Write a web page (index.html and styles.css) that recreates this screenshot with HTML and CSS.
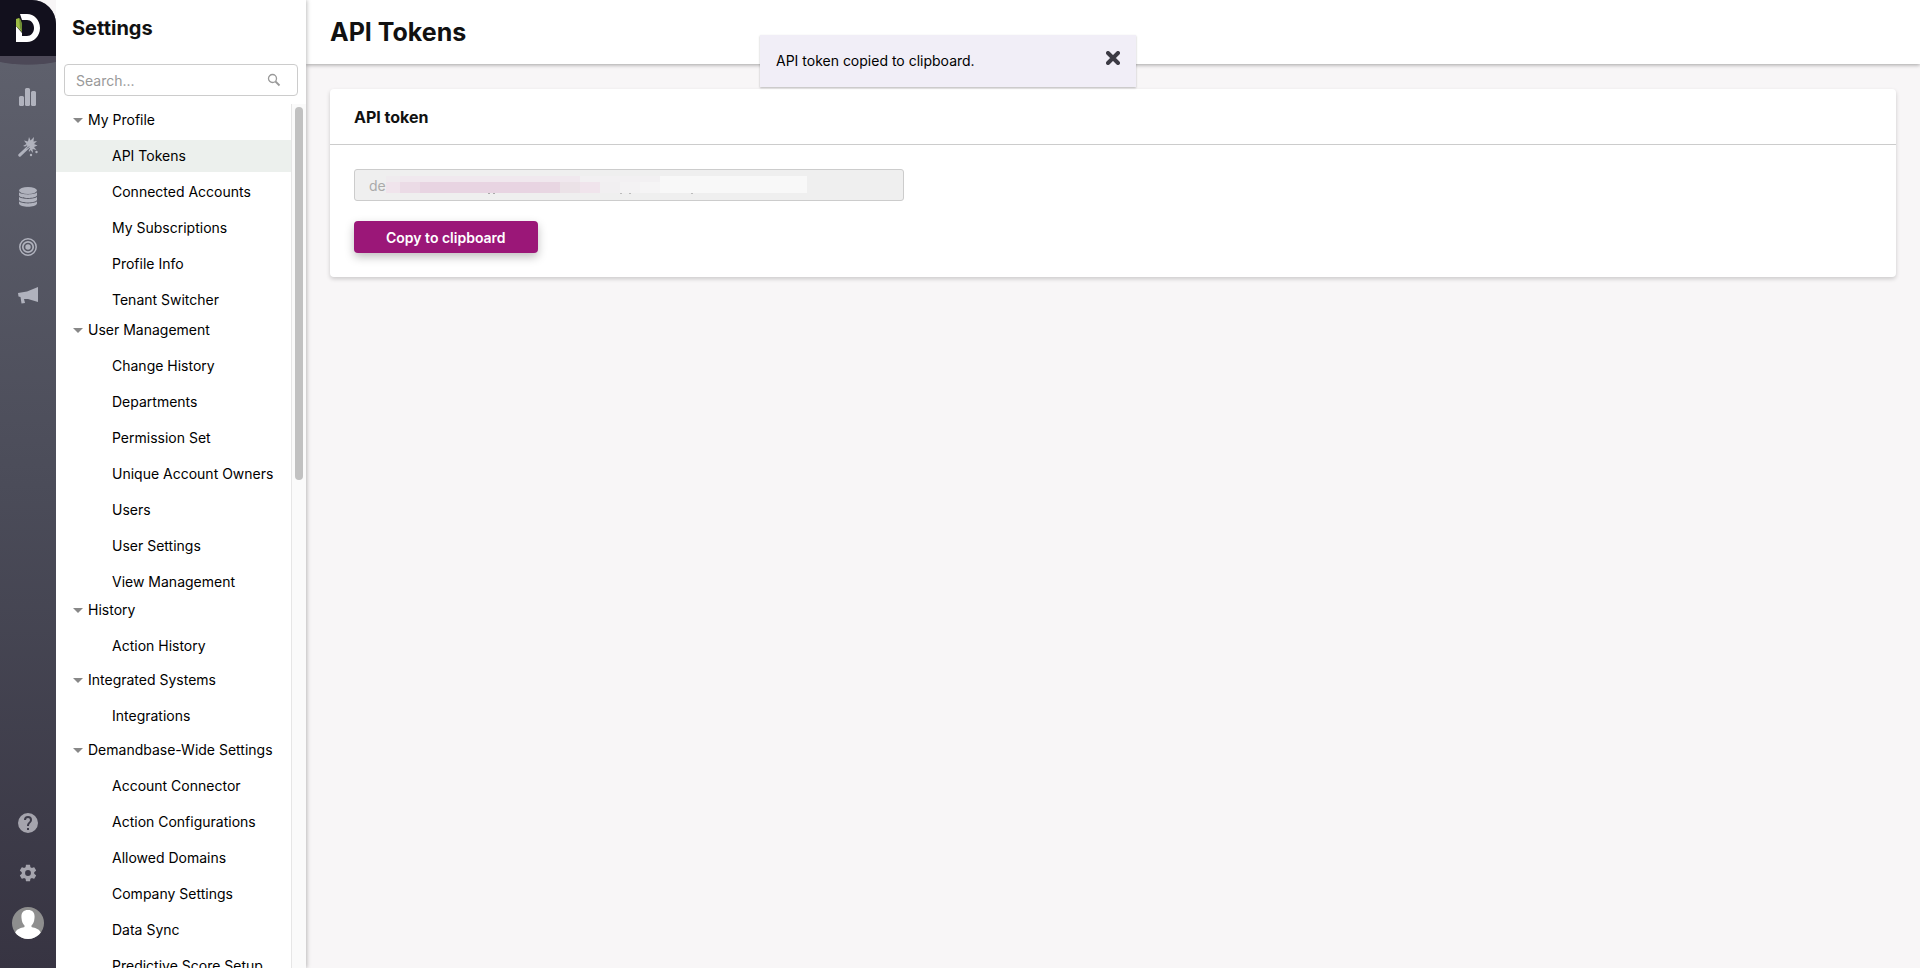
FILE: index.html
```html
<!DOCTYPE html>
<html lang="en">

<head>
    <meta charset="UTF-8">
    <meta name="viewport" content="width=device-width, initial-scale=1">
    <title>API Tokens</title>
    <link rel="stylesheet" href="styles.css">
</head>

<body>
    <nav class="rail" aria-label="Main">
        <a class="logo" href="#" aria-label="Home">
            <svg width="24" height="28" viewBox="0 0 24 28">
                <path fill="#fff" d="M4 0h7c7 0 13 6 13 14s-6 14-13 14H0V17l6 3v2h5c4 0 7-3.500 7-8s-3-8-7-8H6z" />
                <path fill="#fff" d="M0 12l6 7v4H0z" />
                <path fill="#9dbb45" d="M0 5l3-1c2 2 3 5 3 9v5L0 12z" />
                <path fill="#6f8d35" d="M3 4c2 2 3 5 3 9v5L4 14z" />
            </svg>
        </a>
        <div class="rail-top">
            <a class="rail-link" href="#" aria-label="Analytics">
                <svg width="20" height="20" viewBox="0 0 20 20" fill="currentColor">
                    <rect x="1" y="9" width="5" height="10" rx="1.500" />
                    <rect x="7" y="1" width="5" height="18" rx="1.500" />
                    <rect x="13" y="4" width="5" height="15" rx="1.500" />
                </svg>
            </a>
            <a class="rail-link" href="#" aria-label="Orchestration">
                <svg width="20" height="20" viewBox="0 0 20 20" fill="currentColor">
                    <path d="M11 0l1.500 3.500L16 0l-.5 4.500L19 4l-3 3 3.500 1.500L16 10l2.500 3-4-1 .5 4-2.500-3-1.500 2-.5-3.500L9 10 5 9l3.500-2L6 3.500l4 1z" />
                    <path d="M1.500 18.500L10.500 10" fill="none" stroke="#5a5d6a" stroke-width="5" />
                    <path d="M1.800 18.200L11 9.500" fill="none" stroke="currentColor" stroke-width="3" stroke-linecap="round" />
                    <path d="M9 11.500L11 9.500" fill="none" stroke="#5a5d6a" stroke-width="1" />
                    <circle cx="13" cy="18" r="1.200" />
                    <circle cx="18.500" cy="15" r="1.200" />
                </svg>
            </a>
            <a class="rail-link" href="#" aria-label="Data">
                <svg width="20" height="20" viewBox="0 0 20 20" fill="currentColor">
                    <ellipse cx="10" cy="3.500" rx="9" ry="3.500" />
                    <path d="M1 5.300c2 2.800 16 2.800 18 0v2.900c-1 3.700-17 3.700-18 0z" />
                    <path d="M1 9.800c2 2.800 16 2.800 18 0v2.900c-1 3.700-17 3.700-18 0z" />
                    <path d="M1 14.300c2 2.800 16 2.800 18 0v2.200c-1 4.400-17 4.400-18 0z" />
                </svg>
            </a>
            <a class="rail-link" href="#" aria-label="Targeting">
                <svg width="20" height="20" viewBox="0 0 20 20" fill="none" stroke="currentColor">
                    <circle cx="10" cy="10" r="8.200" stroke-width="1.500" />
                    <circle cx="10" cy="10" r="5.200" stroke-width="1.700" />
                    <circle cx="10" cy="10" r="2.700" fill="currentColor" stroke="none" />
                </svg>
            </a>
            <a class="rail-link" href="#" aria-label="Advertising">
                <svg width="20" height="20" viewBox="0 0 20 20" fill="currentColor">
                    <path d="M0 6l9-1.500L20 0v15l-10-3H6l1 4-3.500.5L2.500 10 .5 9.500z" />
                </svg>
            </a>
        </div>
        <div class="rail-bottom">
            <a class="rail-link" href="#" aria-label="Help">
                <svg width="24" height="24" viewBox="0 0 24 24" fill="currentColor">
                    <path d="M12 2a10 10 0 1 0 0 20 10 10 0 0 0 0-20zm1 17h-2v-2h2v2zm2.070-7.750l-.9.920C13.450 12.900 13 13.500 13 15h-2v-.5c0-1.100.45-2.100 1.170-2.830l1.240-1.260c.37-.36.590-.86.590-1.410a2 2 0 0 0-4 0H8a4 4 0 0 1 8 0c0 .88-.36 1.680-.93 2.250z" />
                </svg>
            </a>
            <a class="rail-link" href="#" aria-label="Settings">
                <svg width="20" height="20" viewBox="0 0 24 24" fill="currentColor">
                    <path d="M19.430 12.980c.04-.32.070-.64.070-.98s-.03-.66-.07-.98l2.110-1.650c.19-.15.240-.42.120-.64l-2-3.460c-.12-.22-.39-.3-.61-.22l-2.490 1c-.52-.4-1.080-.73-1.690-.98l-.38-2.650A.49.490 0 0 0 14 2h-4c-.25 0-.46.180-.49.420l-.38 2.650c-.61.250-1.170.590-1.690.98l-2.490-1c-.23-.09-.49 0-.61.220l-2 3.460c-.13.220-.07.490.12.640l2.110 1.650c-.04.320-.07.650-.07.980s.03.660.070.980l-2.110 1.650c-.19.150-.24.420-.12.640l2 3.460c.12.220.39.300.61.220l2.490-1c.52.400 1.080.730 1.690.980l.38 2.650c.03.240.24.420.49.420h4c.25 0 .46-.18.490-.42l.38-2.650c.61-.25 1.170-.59 1.690-.98l2.490 1c.23.090.49 0 .61-.22l2-3.460c.12-.22.070-.49-.12-.64l-2.110-1.650zM12 15.500a3.500 3.500 0 1 1 0-7 3.500 3.500 0 0 1 0 7z" />
                </svg>
            </a>
            <a class="rail-link" href="#" aria-label="Account">
                <svg width="32" height="32" viewBox="0 0 32 32">
                    <clipPath id="avatar"><circle cx="16" cy="16" r="16" /></clipPath>
                    <g clip-path="url(#avatar)">
                        <rect width="32" height="32" fill="#8e8e8e" />
                        <path fill="#fff" d="M16 3c5 0 7 3 6.500 8-.3 4-1.500 6-3 7.500v1.500c4 1 8 2 9.500 6v7H3v-7c1.500-4 5.500-5 9.500-6v-1.500c-1.500-1.500-2.700-3.500-3-7.500C9 6 11 3 16 3z" />
                    </g>
                </svg>
            </a>
        </div>
    </nav>

    <aside class="panel">
        <h2 class="panel-title">Settings</h2>
        <div class="search">
            <input class="search-input" type="text" placeholder="Search..." aria-label="Search settings">
            <svg class="search-icon" width="14" height="14" viewBox="0 0 14 14" fill="none" stroke="#999">
                <circle cx="5.500" cy="5.500" r="4" stroke-width="1.300" />
                <path d="M8.500 8.500l4 4" stroke-width="1.800" />
            </svg>
        </div>
        <div class="tree-wrap">
            <div class="tree">
                <section class="group" style="--rows: 6">
                    <button class="group-title">My Profile</button>
                    <a class="item active" href="#">API Tokens</a>
                    <a class="item" href="#">Connected Accounts</a>
                    <a class="item" href="#">My Subscriptions</a>
                    <a class="item" href="#">Profile Info</a>
                    <a class="item" href="#">Tenant Switcher</a>
                </section>
                <section class="group" style="--rows: 8">
                    <button class="group-title">User Management</button>
                    <a class="item" href="#">Change History</a>
                    <a class="item" href="#">Departments</a>
                    <a class="item" href="#">Permission Set</a>
                    <a class="item" href="#">Unique Account Owners</a>
                    <a class="item" href="#">Users</a>
                    <a class="item" href="#">User Settings</a>
                    <a class="item" href="#">View Management</a>
                </section>
                <section class="group" style="--rows: 2">
                    <button class="group-title">History</button>
                    <a class="item" href="#">Action History</a>
                </section>
                <section class="group" style="--rows: 2">
                    <button class="group-title">Integrated Systems</button>
                    <a class="item" href="#">Integrations</a>
                </section>
                <section class="group" style="--rows: 7">
                    <button class="group-title">Demandbase-Wide Settings</button>
                    <a class="item" href="#">Account Connector</a>
                    <a class="item" href="#">Action Configurations</a>
                    <a class="item" href="#">Allowed Domains</a>
                    <a class="item" href="#">Company Settings</a>
                    <a class="item" href="#">Data Sync</a>
                    <a class="item" href="#">Predictive Score Setup</a>
                </section>
            </div>
            <div class="scrollbar">
                <div class="thumb"></div>
            </div>
        </div>
    </aside>

    <main class="main">
        <header class="page-header">
            <h1 class="page-title">API Tokens</h1>
        </header>
        <section class="card">
            <h3 class="card-title">API token</h3>
            <div class="card-body">
                <div class="token">
                    <input class="token-input" type="text" value="de" aria-label="API token" disabled>
                    <div class="token-mask"></div>
                </div>
                <button class="copy">Copy to clipboard</button>
            </div>
        </section>
    </main>

    <div class="toast" role="status">
        <span>API token copied to clipboard.</span>
        <button class="toast-close" aria-label="Close">
            <svg width="14" height="14" viewBox="0 0 14 14" stroke="#3c3a44" stroke-width="4" stroke-linecap="round">
                <path d="M2 2l10 10M12 2L2 12" />
            </svg>
        </button>
    </div>
</body>

</html>
```
FILE: styles.css
```css
* {
    box-sizing: border-box;
}

body {
    margin: 0;
    height: 100vh;
    display: flex;
    overflow: hidden;
    font: 14px/20px Inter, "Liberation Sans", sans-serif;
    color: #000;
    background: #f8f6f7;
}

h1,
h2,
h3 {
    margin: 0;
    font-weight: 700;
    color: #111;
}

a {
    color: inherit;
    text-decoration: none;
}

button {
    border: 0;
    padding: 0;
    font: inherit;
    color: inherit;
    background: none;
    cursor: pointer;
}

svg {
    display: block;
}

/* left icon rail */
.rail {
    flex: none;
    width: 56px;
    display: flex;
    flex-direction: column;
    overflow: hidden;
    color: #b0b2bd;
    background: linear-gradient(#61636f, #4b4c59 50%, #373442);
    border-top-right-radius: 24px;
}

.logo {
    flex: none;
    height: 56px;
    display: flex;
    align-items: center;
    justify-content: center;
    background: #12101d;
}

.rail-top {
    display: flex;
    flex-direction: column;
    padding-top: 16px;
    background: radial-gradient(ellipse 40px 9px at 50% 0, #4c4857 92%, transparent);
}

.rail-bottom {
    margin-top: auto;
    padding-bottom: 20px;
    color: #a5a4ad;
}

.rail-link {
    height: 50px;
    display: flex;
    align-items: center;
    justify-content: center;
}

/* settings panel */
.panel {
    flex: none;
    width: 250px;
    display: flex;
    flex-direction: column;
    background: #fff;
    box-shadow: 1px 0 4px rgba(0, 0, 0, .25);
    clip-path: inset(0 -8px 0 0);
    z-index: 2;
}

.panel-title {
    padding: 16px 16px 24px;
    font-size: 20px;
    line-height: 24px;
}

.search {
    position: relative;
    margin: 0 8px 8px;
}

.search-input {
    display: block;
    width: 100%;
    height: 32px;
    padding: 0 36px 0 11px;
    border: 1px solid #ccc;
    border-radius: 4px;
    font: inherit;
    background: #fff;
}

.search-input::placeholder {
    color: #999;
}

.search-icon {
    position: absolute;
    top: 9px;
    right: 17px;
}

.tree-wrap {
    flex: 1;
    min-height: 0;
    display: flex;
}

.tree {
    flex: 1;
    overflow: hidden;
}

/* each group takes 35px a row, its items are 36px */
.group {
    height: calc(var(--rows) * 35px);
}

.group-title {
    width: 100%;
    height: 32px;
    display: flex;
    align-items: center;
    gap: 5px;
    padding-left: 17px;
}

.group-title::before {
    content: "";
    border: 5px solid transparent;
    border-top-color: #888;
    border-bottom: 0;
}

.item {
    display: flex;
    align-items: center;
    height: 32px;
    margin-top: 4px;
    padding-left: 56px;
    white-space: nowrap;
}

.item.active {
    background: #ecf0ed;
}

.scrollbar {
    width: 15px;
    padding: 3px;
    background: #fafafa;
    border-left: 1px solid #e6e6e6;
}

.thumb {
    width: 8px;
    height: 43.5%;
    border-radius: 4px;
    background: #c1c1c1;
}

/* content */
.main {
    flex: 1;
    min-width: 0;
}

.page-header {
    height: 64px;
    display: flex;
    align-items: center;
    padding: 0 24px;
    background: #fff;
    box-shadow: 0 1px 4px rgba(0, 0, 0, .35);
}

.page-title {
    font-size: 25px;
    line-height: 32px;
}

.card {
    margin: 25px 24px;
    background: #fff;
    border-radius: 4px;
    box-shadow: 0 2px 4px rgba(0, 0, 0, .18);
}

.card-title {
    padding: 16px 24px 15px;
    border-bottom: 1px solid #ccc;
    font-size: 16px;
    line-height: 24px;
}

.card-body {
    padding: 24px;
}

.token {
    position: relative;
    max-width: 550px;
    margin-bottom: 20px;
}

.token-input {
    display: block;
    width: 100%;
    height: 32px;
    padding: 0 14px;
    border: 1px solid #ccc;
    border-radius: 3px;
    font: inherit;
    color: #aaa;
    background: #efefef;
}

/* blocks hiding the rest of the token, descenders show below */
.token-mask {
    position: absolute;
    top: 7px;
    left: 32px;
    width: 421px;
    height: 18px;
    background:
        linear-gradient(#aaa, #aaa) 102px 100% / 2px 1px no-repeat,
        linear-gradient(#aaa, #aaa) 107px 100% / 2px 1px no-repeat,
        linear-gradient(#bbb, #bbb) 234px 100% / 2px 1px no-repeat,
        linear-gradient(#bbb, #bbb) 243px 100% / 2px 1px no-repeat,
        linear-gradient(#bbb, #bbb) 305px 100% / 2px 1px no-repeat,
        linear-gradient(90deg, #f0e4ec 14px, #ebdbe6 14px 34px, #e8d4e2 34px 154px, #e8d6e2 154px 174px, #ebe2e7 174px 194px, #f0e4ec 194px 214px, #f1eff1 214px 234px, #f3f2f3 234px 254px, #f5f4f5 254px 274px, #f8f8f8 274px) 0 6px / 100% 11px no-repeat,
        linear-gradient(90deg, #efebee 14px, #f0e8ee 14px 194px, #f2f0f2 194px 274px, #f8f8f8 274px) 0 0 / 100% 17px no-repeat;
}

.copy {
    height: 32px;
    padding: 1px 32px 0;
    border-radius: 4px;
    font-weight: 600;
    color: #fff;
    background: #9b1778;
    box-shadow: 0 4px 10px rgba(0, 0, 0, .25);
}

.toast {
    position: absolute;
    top: 35px;
    left: 50%;
    width: 376px;
    height: 52px;
    margin-left: -200px;
    display: flex;
    justify-content: space-between;
    padding: 16px;
    background: #f1eef7;
    box-shadow: 0 1px 2px rgba(0, 0, 0, .25);
    z-index: 5;
}

.toast-close {
    width: 14px;
    height: 14px;
}
```
